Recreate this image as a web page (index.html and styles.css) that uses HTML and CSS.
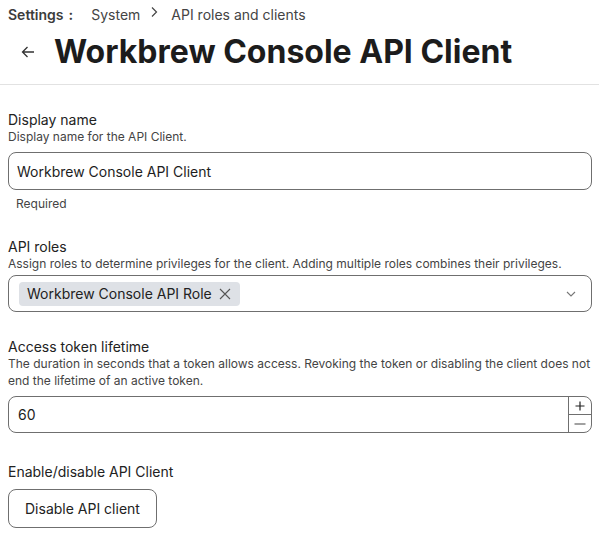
FILE: index.html
```html
<!DOCTYPE html>
<html>
<head>
<meta charset="utf-8">
<link rel="stylesheet" href="styles.css">
</head>
<body>
<header class="page-header">
  <nav class="crumbs">
    <span class="crumb-root">Settings</span><span class="crumb-colon">:</span>
    <span class="crumb">System</span>
    <svg class="crumb-sep" width="12" height="12" viewBox="0 0 12 12"><path d="M4 1.5 L8.5 6 L4 10.5" fill="none" stroke="#444" stroke-width="1.2"/></svg>
    <span class="crumb">API roles and clients</span>
  </nav>
  <div class="title-row">
    <svg class="back" width="16" height="16" viewBox="0 0 16 16"><path d="M14 8 H2.5 M7.5 3 L2.5 8 L7.5 13" fill="none" stroke="#333" stroke-width="1.3"/></svg>
    <h1 class="title">Workbrew Console API Client</h1>
  </div>
</header>
<main class="form">
  <section class="field">
    <div class="label">Display name</div>
    <div class="help">Display name for the API Client.</div>
    <div class="box text-box">Workbrew Console API Client</div>
    <div class="note">Required</div>
  </section>
  <section class="field">
    <div class="label">API roles</div>
    <div class="help">Assign roles to determine privileges for the client. Adding multiple roles combines their privileges.</div>
    <div class="box select-box">
      <span class="chip">Workbrew Console API Role
        <svg class="chip-x" width="14" height="14" viewBox="0 0 14 14"><path d="M2 2 L12 12 M12 2 L2 12" fill="none" stroke="#555" stroke-width="1.1"/></svg>
      </span>
      <svg class="chev" width="12" height="12" viewBox="0 0 12 12"><path d="M2 4 L6 8 L10 4" fill="none" stroke="#777" stroke-width="1.1"/></svg>
    </div>
  </section>
  <section class="field">
    <div class="label">Access token lifetime</div>
    <div class="help">The duration in seconds that a token allows access. Revoking the token or disabling the client does not end the lifetime of an active token.</div>
    <div class="box num-box">
      <span class="num-val">60</span>
      <span class="spin">
        <span class="spin-btn"><svg width="10" height="10" viewBox="0 0 10 10"><path d="M5 0.5 V9.5 M0.5 5 H9.5" stroke="#222" stroke-width="1.2"/></svg></span>
        <span class="spin-btn"><svg width="12" height="10" viewBox="0 0 12 10"><path d="M0.5 5 H11.5" stroke="#555" stroke-width="1.1"/></svg></span>
      </span>
    </div>
  </section>
  <section class="field last">
    <div class="label">Enable/disable API Client</div>
    <button class="btn">Disable API client</button>
  </section>
</main>
</body>
</html>
```
FILE: styles.css
```css
html, body { margin: 0; padding: 0; background: #fff; }
body { font-family: Inter, "Noto Sans", sans-serif; color: #222; width: 599px; overflow: hidden; }
.page-header { border-bottom: 1px solid #e2e2e2; padding: 4px 8px 0 8px; height: 80px; box-sizing: content-box; }
.crumbs { display: flex; align-items: center; font-size: 14px; color: #444; height: 20px; }
.crumb-root { font-weight: 600; color: #3c3c3c; }
.crumb-colon { font-weight: 700; margin-left: 5px; margin-right: 18px; color: #3c3c3c; }
.crumb { color: #444; }
.crumb-sep { margin: 0 11px 4px 8px; }
.title-row { display: flex; align-items: center; margin-top: 8px; }
.back { margin-left: 12px; margin-right: 18px; }
.title { font-size: 32px; font-weight: 700; color: #1c1c1c; margin: 0; line-height: 40px; letter-spacing: 0; }
.form { padding: 0 7px 0 8px; }
.field { padding-top: 26px; }
.label { font-size: 14px; color: #222; line-height: 17px; }
.help { font-size: 12px; color: #444; line-height: 17px; }
.box { border: 1px solid #6f6f6f; border-radius: 8px; box-sizing: border-box; margin-top: 7px; }
.text-box { height: 38px; padding: 0 8px; display: flex; align-items: center; font-size: 14px; color: #1d1d1d; }
.note { font-size: 12px; color: #444; margin-top: 5px; padding-left: 8px; line-height: 17px; }
.select-box { margin-top: 3px; height: 37px; display: flex; align-items: center; justify-content: space-between; padding: 0 14px 0 10px; }
.chip { background: #dee1e6; border-radius: 4px; height: 24px; display: inline-flex; align-items: center; padding: 0 8px; font-size: 14px; color: #222; }
.chip-x { margin-left: 6px; }
.num-box { height: 37px; display: flex; align-items: stretch; justify-content: space-between; padding-left: 9px; }
.num-val { font-size: 14px; display: flex; align-items: center; color: #1d1d1d; }
.spin { display: flex; flex-direction: column; width: 22px; border-left: 1px solid #6f6f6f; }
.spin-btn { flex: 1; display: flex; align-items: center; justify-content: center; }
.spin-btn + .spin-btn { border-top: 1px solid #6f6f6f; }
.field.last { padding-top: 30px; }
.last .label { margin-bottom: 9px; }
.btn { font-family: Inter, "Noto Sans", sans-serif; font-size: 14px; color: #222; background: #fff; border: 1px solid #6f6f6f; border-radius: 8px; height: 39px; padding: 0 16px; }
```
